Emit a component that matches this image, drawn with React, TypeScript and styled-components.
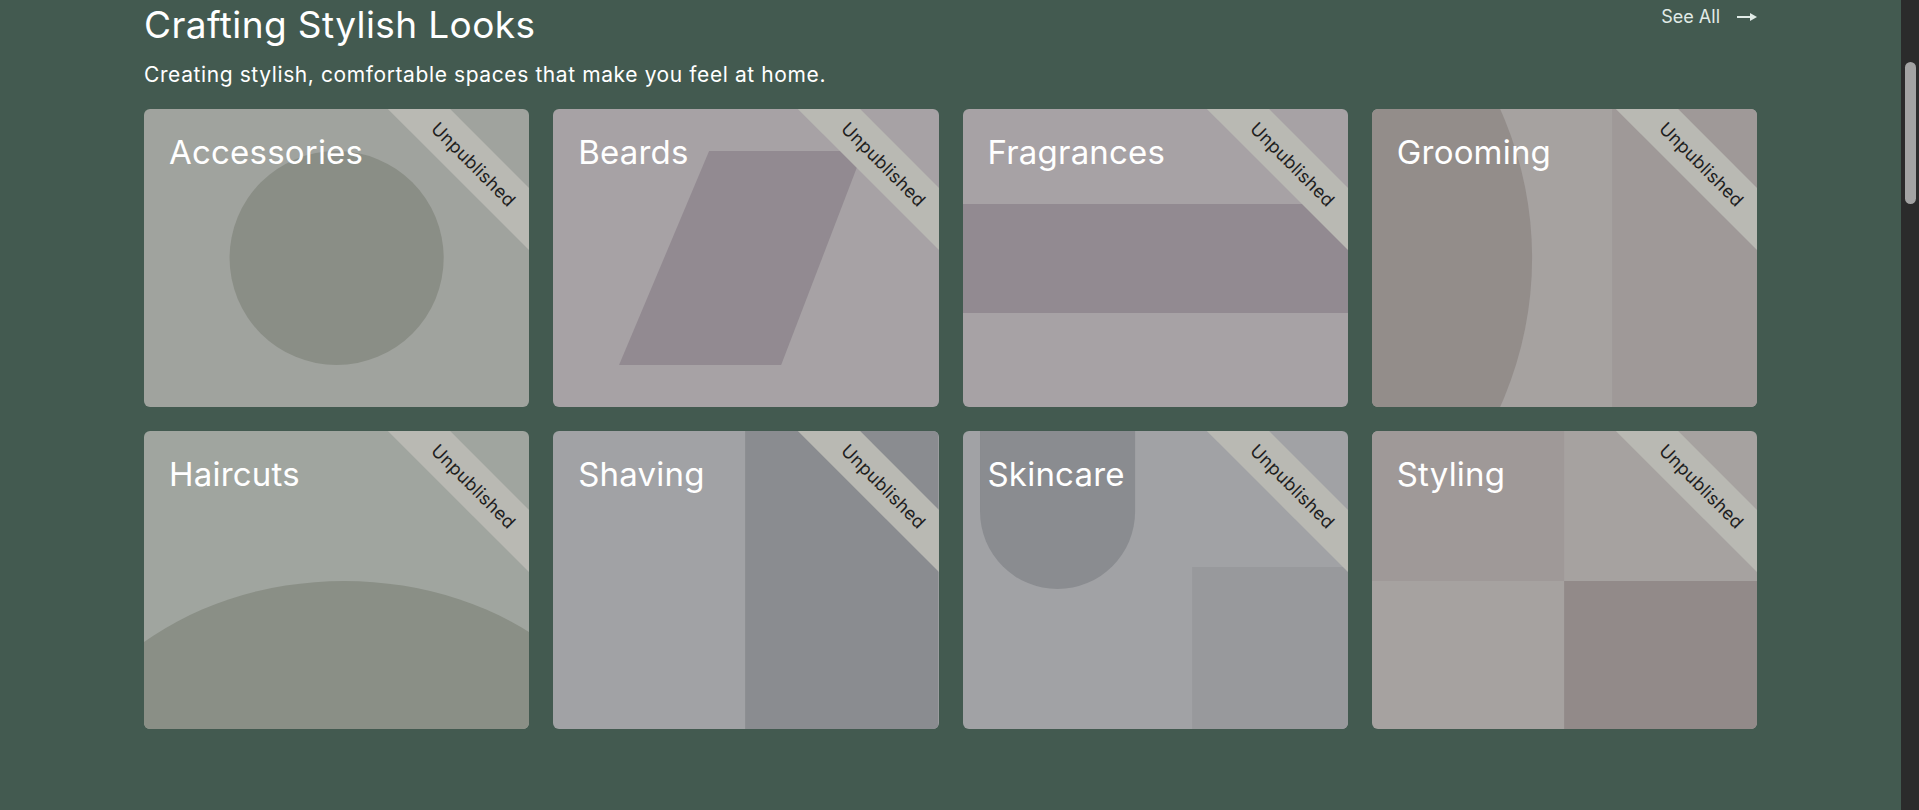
import React from 'react';
import styled, { createGlobalStyle } from 'styled-components';

const GlobalStyle = createGlobalStyle`
  html {
    background-color: #435a50;
  }
  body {
    margin: 0;
    font-family: 'Inter', 'Open Sans', sans-serif;
    color: #fff;
  }
`;

interface ICard {
  title: string;
  bg: string;
  art: React.ReactNode;
}

const cards: ICard[] = [
  {
    title: 'Accessories',
    bg: '#a0a39e',
    art: <circle cx="192.5" cy="149" r="107" fill="#8a8e86" />,
  },
  {
    title: 'Beards',
    bg: '#a7a2a5',
    art: <polygon points="156,42 310,42 228,256 66,256" fill="#928a91" />,
  },
  {
    title: 'Fragrances',
    bg: '#a7a2a5',
    art: <rect x="0" y="95" width="385" height="109" fill="#928a91" />,
  },
  {
    title: 'Grooming',
    bg: '#a6a2a0',
    art: (
      <>
        <rect x="240" y="0" width="145" height="298" fill="#9f9998" />
        <circle cx="-203" cy="149" r="363" fill="#938d8a" />
      </>
    ),
  },
  {
    title: 'Haircuts',
    bg: '#a0a59f',
    art: <ellipse cx="200" cy="390" rx="300" ry="240" fill="#8a8f86" />,
  },
  {
    title: 'Shaving',
    bg: '#a1a2a5',
    art: <rect x="192" y="0" width="193" height="298" fill="#8a8c90" />,
  },
  {
    title: 'Skincare',
    bg: '#a1a2a5',
    art: (
      <>
        <rect x="17" y="-80" width="155" height="238" rx="77.5" fill="#8a8c90" />
        <rect x="229" y="136" width="156" height="162" fill="#98999c" />
      </>
    ),
  },
  {
    title: 'Styling',
    bg: '#a6a2a0',
    art: (
      <>
        <rect x="0" y="0" width="192" height="150" fill="#9f9998" />
        <rect x="192" y="150" width="193" height="148" fill="#928a89" />
      </>
    ),
  },
];

const ArrowIcon = () => (
  <svg width="20" height="10" viewBox="0 0 20 10">
    <line x1="0" y1="5" x2="14" y2="5" stroke="currentColor" strokeWidth="2" />
    <polygon points="13,1 20,5 13,9" fill="currentColor" />
  </svg>
);

const App = () => {
  return (
    <Page>
      <GlobalStyle />
      <Section>
        <Header>
          <div>
            <Title>Crafting Stylish Looks</Title>
            <Subtitle>Creating stylish, comfortable spaces that make you feel at home.</Subtitle>
          </div>
          <SeeAll href="#">
            See All
            <ArrowIcon />
          </SeeAll>
        </Header>
        <Grid>
          {cards.map((card) => (
            <Card key={card.title} bg={card.bg}>
              <Art viewBox="0 0 385 298" preserveAspectRatio="none">
                {card.art}
              </Art>
              <CardTitle>{card.title}</CardTitle>
              <Ribbon>Unpublished</Ribbon>
            </Card>
          ))}
        </Grid>
      </Section>
      <ScrollTrack>
        <ScrollThumb />
      </ScrollTrack>
    </Page>
  );
};

export default App;

const Page = styled.div`
  min-height: 100vh;
  padding-right: 18px;
`;

const Section = styled.section`
  max-width: 1613px;
  margin: 0 auto;
`;

const Header = styled.div`
  display: flex;
  justify-content: space-between;
  align-items: flex-start;
  padding-top: 3px;
`;

const Title = styled.h2`
  margin: 0;
  font-size: 37px;
  font-weight: 400;
  line-height: 1.2;
  letter-spacing: 0.4px;
`;

const Subtitle = styled.p`
  margin: 14px 0 0;
  font-size: 21px;
  font-weight: 400;
  line-height: 1.3;
  letter-spacing: 0.6px;
`;

const SeeAll = styled.a`
  display: flex;
  align-items: center;
  gap: 17px;
  margin-top: 3px;
  font-size: 18px;
  color: #e1ebe7;
  text-decoration: none;
`;

const Grid = styled.div`
  display: grid;
  grid-template-columns: repeat(4, 1fr);
  gap: 24px;
  margin-top: 20px;
`;

const Card = styled.div<{ bg: string }>`
  position: relative;
  height: 298px;
  border-radius: 6px;
  overflow: hidden;
  background-color: ${(p) => p.bg};
`;

const Art = styled.svg`
  position: absolute;
  inset: 0;
  width: 100%;
  height: 100%;
`;

const CardTitle = styled.h3`
  position: relative;
  margin: 0;
  padding: 24px 25px;
  font-size: 33px;
  font-weight: 400;
  line-height: 1.2;
  letter-spacing: 0.2px;
  color: #fff;
`;

const Ribbon = styled.div`
  position: absolute;
  top: 33px;
  right: -55px;
  width: 220px;
  height: 44px;
  display: flex;
  align-items: center;
  justify-content: center;
  background-color: #b9b9b3;
  color: #1e1e1e;
  font-size: 18px;
  letter-spacing: 0.3px;
  transform: rotate(45deg);
`;

/* the browser's scrollbar, as seen in the page */
const ScrollTrack = styled.div`
  position: fixed;
  top: 0;
  right: 0;
  width: 18px;
  height: 100vh;
  padding-top: 62px;
  box-sizing: border-box;
  background-color: #2b2b2b;
`;

const ScrollThumb = styled.div`
  width: 11px;
  height: 142px;
  margin-left: 4px;
  border-radius: 6px;
  background-color: #a3a3a3;
`;
